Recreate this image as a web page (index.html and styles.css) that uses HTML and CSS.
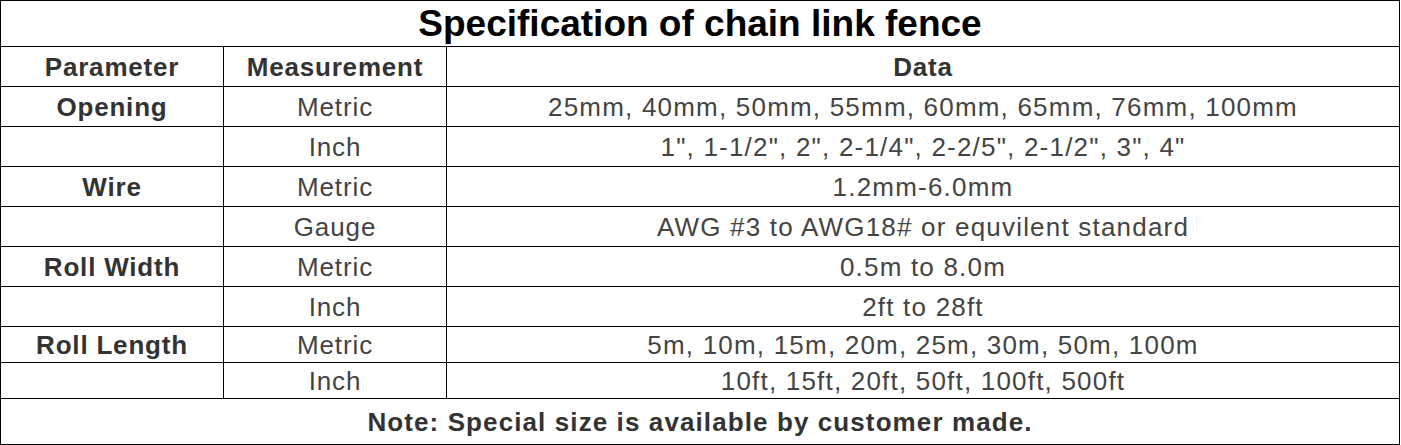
FILE: index.html
```html
<!DOCTYPE html>
<html>
<head>
<meta charset="utf-8">
<link rel="stylesheet" href="styles.css">
</head>
<body>
<table class="spec">
  <colgroup>
    <col class="c1"><col class="c2"><col class="c3">
  </colgroup>
  <tr class="r-title"><th colspan="3" class="title">Specification of chain link fence</th></tr>
  <tr class="r40"><th>Parameter</th><th>Measurement</th><th>Data</th></tr>
  <tr class="r40"><td class="b">Opening</td><td>Metric</td><td class="d">25mm, 40mm, 50mm, 55mm, 60mm, 65mm, 76mm, 100mm</td></tr>
  <tr class="r40"><td></td><td>Inch</td><td class="d">1", 1-1/2", 2", 2-1/4", 2-2/5", 2-1/2", 3", 4"</td></tr>
  <tr class="r40"><td class="b">Wire</td><td>Metric</td><td class="d">1.2mm-6.0mm</td></tr>
  <tr class="r40"><td></td><td>Gauge</td><td class="d">AWG #3 to AWG18# or equvilent standard</td></tr>
  <tr class="r40"><td class="b">Roll Width</td><td>Metric</td><td class="d">0.5m to 8.0m</td></tr>
  <tr class="r40"><td></td><td>Inch</td><td class="d">2ft to 28ft</td></tr>
  <tr class="r36"><td class="b">Roll Length</td><td>Metric</td><td class="d">5m, 10m, 15m, 20m, 25m, 30m, 50m, 100m</td></tr>
  <tr class="r36"><td></td><td>Inch</td><td class="d">10ft, 15ft, 20ft, 50ft, 100ft, 500ft</td></tr>
  <tr class="r-note"><td colspan="3" class="b note">Note: Special size is available by customer made.</td></tr>
</table>
</body>
</html>
```
FILE: styles.css
```css
html, body {
  margin: 0;
  padding: 0;
  background: #fff;
}
.spec {
  border-collapse: collapse;
  width: 1400px;
  table-layout: fixed;
  font-family: "Liberation Sans", Arial, sans-serif;
  font-size: 26px;
  letter-spacing: 0.9px;
  color: #444;
}
.c1 { width: 223px; }
.c2 { width: 223px; }
.spec th, .spec td {
  border: 1px solid #000;
  padding: 0;
  text-align: center;
  vertical-align: middle;
  white-space: nowrap;
  line-height: 1;
}
.spec td.d {
  letter-spacing: 1.2px;
}
.spec th, .spec .b {
  font-weight: bold;
  color: #333;
  letter-spacing: 0.8px;
}
.spec .note {
  letter-spacing: 1.1px;
}
.spec th.title {
  font-size: 37px;
  color: #000;
  letter-spacing: 0;
}
.r-title { height: 46px; }
.r40 { height: 40px; }
.r36 { height: 36px; }
.r-note { height: 46px; }
```
